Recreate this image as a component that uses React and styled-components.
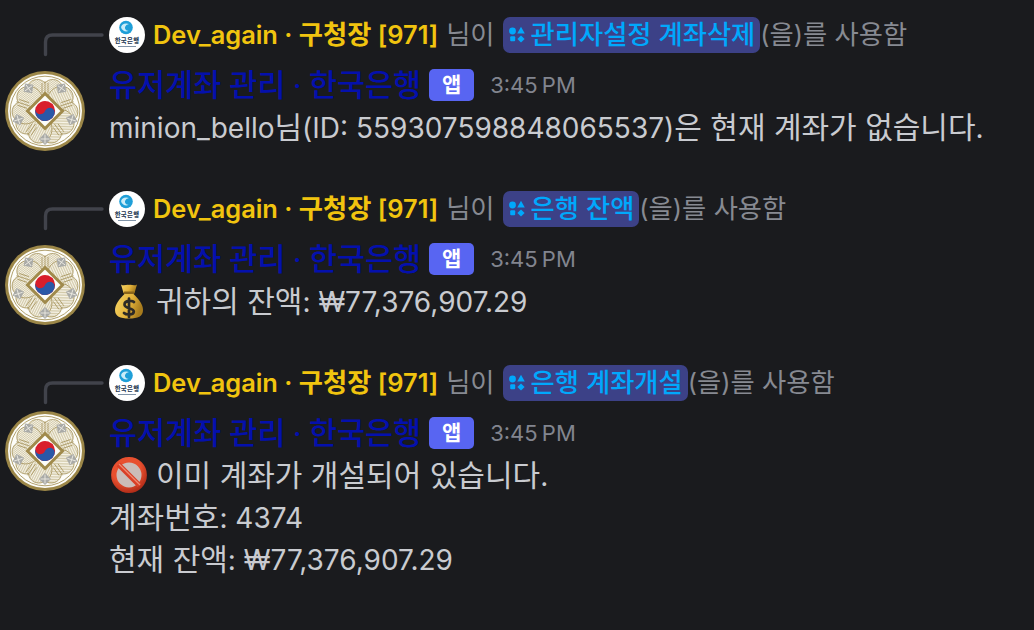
import React from "react";
import styled, { createGlobalStyle } from "styled-components";

const Global = createGlobalStyle`
  html, body { margin: 0; padding: 0; background: #1a1b1e; }
  body { width: 1034px; height: 630px; overflow: hidden; font-family: Inter, "Noto Sans CJK KR", sans-serif; }
`;

const Page = styled.div`
  width: 1034px;
  height: 630px;
  padding-top: 17px;
  box-sizing: border-box;
  background: #1a1b1e;
  display: flex;
  flex-direction: column;
  gap: 43px;
`;
const Message = styled.article`
  display: grid;
  grid-template-columns: 109px 1fr;
  grid-template-rows: 36px auto;
  row-gap: 11px;
`;
const Spine = styled.svg`
  display: block;
  width: 62px;
  height: 24px;
  margin: 15px 0 0 43px;
  overflow: visible;
`;
const ReplyRow = styled.div`
  display: flex;
  align-items: center;
  height: 36px;
  font-size: 25.4px;
  line-height: 36px;
  white-space: pre;
`;
const MiniAvatar = styled.svg`
  width: 36px;
  height: 36px;
  flex: none;
  margin-right: 8px;
`;
const ReplyName = styled.span`
  color: #f1c40f;
  font-weight: 600;
  margin-right: 8px;
`;
const ReplyText = styled.span`
  color: #878a92;
`;
const Command = styled.span`
  display: inline-flex;
  align-items: center;
  height: 36px;
  margin-left: 8px;
  padding: 0 5px 0 5px;
  border-radius: 7px;
  background: #3c4187;
  color: #00a8fc;
  font-weight: 500;
`;
const CommandIcon = styled.svg`
  width: 18px;
  height: 18px;
  margin-right: 5px;
`;
const AvatarCell = styled.div`
  margin-top: ${p => p.$top}px;
  padding-left: 5px;
`;
const Avatar = styled.svg`
  display: block;
  width: 80px;
  height: 80px;
  margin-bottom: -20px;
`;
const Content = styled.div`
  min-width: 0;
`;
const Header = styled.div`
  display: flex;
  align-items: center;
  height: 42px;
  line-height: 42px;
  white-space: nowrap;
`;
const BotName = styled.span`
  color: #0410ad;
  font-size: 28px;
  font-weight: 500;
`;
const AppTag = styled.span`
  display: inline-flex;
  align-items: center;
  justify-content: center;
  width: 45px;
  height: 32px;
  margin-left: 8px;
  border-radius: 5px;
  background: #5865f2;
  color: #fff;
  font-size: 21px;
  font-weight: 600;
`;
const Time = styled.span`
  margin-left: 16px;
  color: #82858f;
  font-size: 22px;
  word-spacing: -2px;
`;
const Line = styled.div`
  display: flex;
  align-items: center;
  height: 42px;
  line-height: 42px;
  color: #c9cbd0;
  font-size: 28px;
  white-space: pre;
`;
const Hangul = styled.span`
  font-size: ${p => p.$size};
`;
const Emoji = styled.svg`
  width: 36px;
  height: 36px;
  margin: 0 9px 0 2px;
  flex: none;
`;

const Mixed = ({ text, size }) =>
  text.split(/([\u3131-\uD79D]+(?: [\u3131-\uD79D]+)*)/).map((part, i) =>
    i % 2 ? <Hangul key={i} $size={size}>{part}</Hangul> : part
  );

const Mini = () => (
  <MiniAvatar viewBox="0 0 36 36">
    <circle cx="18" cy="18" r="18" fill="#fff" />
    <circle cx="17" cy="10.5" r="6.8" fill="#1f9fd8" />
    <path d="M12 10a5.5 4.5 0 0 1 8-3a5 4 0 0 0-4 3a3 3 0 0 0 4 3.5a5 5 0 0 1-8-3.5z" fill="#c9ecf8" />
    <text x="18" y="26" textAnchor="middle" fontSize="6.4" letterSpacing="0.3" fontWeight="700" fill="#1b3550" fontFamily="Noto Sans CJK KR">한국은행</text>
    <rect x="9" y="29" width="18" height="1" fill="#7f93a8" />
  </MiniAvatar>
);

const petals = [0, 72, 144, 216, 288];
const Seal = () => (
  <Avatar viewBox="0 0 80 80">
    <defs>
      <pattern id="hatch" width="1.6" height="1.6" patternUnits="userSpaceOnUse" patternTransform="rotate(35)">
        <rect width="1.6" height="1.6" fill="#f7f4e8" />
        <rect width="1.6" height="0.6" fill="#c6bb94" />
      </pattern>
    </defs>
    <circle cx="40" cy="40" r="40" fill="#9c8748" />
    <circle cx="40" cy="40" r="37" fill="#fdfdf9" />
    <circle cx="40" cy="40" r="34.8" fill="#fdfdf9" stroke="#a8965f" strokeWidth="0.9" />
    {petals.map(a => (
      <g key={a} transform={`rotate(${a} 40 40)`}>
        <path d="M40 40C25 35 17 25 23 14C27 7 36 7 40 12C44 7 53 7 57 14C63 25 55 35 40 40z" fill="url(#hatch)" stroke="#a8965f" strokeWidth="0.8" />
        <path d="M37 22V12M43 22V12M40 24V10" fill="none" stroke="#a8965f" strokeWidth="0.8" />
      </g>
    ))}
    {[36, 108, 180, 252, 324].map(a => (
      <g key={a} transform={`rotate(${a} 40 40)`}>
        <path d="M40 6L46 12L40 18L34 12z" fill="#a9aaa7" />
        <path d="M40 7.5V16.5M35.5 12H44.5" stroke="#eceae2" strokeWidth="0.9" />
      </g>
    ))}
    <path d="M40 22.5L57.5 40L40 57.5L22.5 40z" fill="#fdfdf9" stroke="#a08a4b" strokeWidth="3" />
    <g transform="rotate(20 40 40)">
      <circle cx="40" cy="40" r="10" fill="#d81e2c" />
      <path d="M30 40a5 5 0 0 0 10 0a5 5 0 0 1 10 0a10 10 0 0 1-20 0z" fill="#2a58a8" />
    </g>
  </Avatar>
);

const Slash = () => (
  <CommandIcon viewBox="0 0 18 18" fill="#00a8fc">
    <circle cx="4.5" cy="5" r="3.4" />
    <path d="M13 .8L16.8 7.6H9.2z" />
    <rect x="2.2" y="10.2" width="5" height="5" rx="1" />
    <path d="M13 9.4L16.6 13L13 16.6L9.4 13z" />
  </CommandIcon>
);

const MoneyBag = () => (
  <Emoji viewBox="0 0 36 36">
    <defs>
      <linearGradient id="bag" x1="0" x2="1" y1="0" y2="0.3">
        <stop offset="0" stopColor="#f6d566" />
        <stop offset="0.6" stopColor="#e3b23a" />
        <stop offset="1" stopColor="#a87c1e" />
      </linearGradient>
    </defs>
    <path d="M10 1.5C13 3.5 16 1 18 2C20 1 23 3.5 26 1.5L23.5 10H12.5z" fill="url(#bag)" />
    <rect x="12.5" y="8.5" width="11" height="3" rx="1.4" fill="#8a651a" />
    <path d="M13.5 11C8 16 4 22 4 27C4 33.5 9 35.5 18 35.5C27 35.5 32 33.5 32 27C32 22 28 16 22.5 11z" fill="url(#bag)" />
    <path d="M23 19C21.5 17.4 13.8 17 13.5 21.3C13.2 26 22.8 24.4 22.8 28.6C22.5 32.4 15 32 13 30M18 15.5V34" fill="none" stroke="#2d2a26" strokeWidth="2.7" strokeLinecap="round" />
  </Emoji>
);

const NoEntry = () => (
  <Emoji viewBox="0 0 36 36">
    <defs>
      <radialGradient id="ring" cx="0.4" cy="0.3" r="0.8">
        <stop offset="0.6" stopColor="#e8502f" />
        <stop offset="1" stopColor="#b02c18" />
      </radialGradient>
    </defs>
    <circle cx="18" cy="18" r="15.2" fill="#cbbdb8" stroke="url(#ring)" strokeWidth="5.4" />
    <path d="M7.5 7.5L28.5 28.5" stroke="#d93f26" strokeWidth="5.2" />
    <path d="M8 7L29 28" stroke="#f08a70" strokeWidth="1.2" />
  </Emoji>
);

const messages = [
  {
    command: "관리자설정 계좌삭제",
    top: 7,
    lines: [[null, "minion_bello님(ID: 559307598848065537)은 현재 계좌가 없습니다."]],
  },
  {
    command: "은행 잔액",
    top: 7,
    lines: [[MoneyBag, "귀하의 잔액: ₩77,376,907.29"]],
  },
  {
    command: "은행 계좌개설",
    top: -1,
    lines: [
      [NoEntry, "이미 계좌가 개설되어 있습니다."],
      [null, "계좌번호: 4374"],
      [null, "현재 잔액: ₩77,376,907.29"],
    ],
  },
];

export default function App() {
  return (
    <>
      <Global />
      <Page>
        {messages.map(m => (
          <Message key={m.command}>
            <Spine viewBox="0 0 62 24">
              <path d="M2.5 22.5V10Q2.5 3 9.5 3H59" fill="none" stroke="#41434b" strokeWidth="3.4" strokeLinecap="round" />
            </Spine>
            <ReplyRow>
              <Mini />
              <ReplyName><Mixed text="Dev_again · 구청장 [971]" size="26.3px" /></ReplyName>
              <ReplyText><Mixed text="님이" size="26.3px" /></ReplyText>
              <Command><Slash /><Mixed text={m.command} size="26.3px" /></Command>
              <ReplyText><Mixed text="(을)를 사용함" size="26.3px" /></ReplyText>
            </ReplyRow>
            <AvatarCell $top={m.top}><Seal /></AvatarCell>
            <Content>
              <Header>
                <BotName><Mixed text="유저계좌 관리 · 한국은행" size="30.5px" /></BotName>
                <AppTag>앱</AppTag>
                <Time>3:45 PM</Time>
              </Header>
              {m.lines.map(([Icon, text]) => (
                <Line key={text}>{Icon && <Icon />}<span><Mixed text={text} size="30px" /></span></Line>
              ))}
            </Content>
          </Message>
        ))}
      </Page>
    </>
  );
}
